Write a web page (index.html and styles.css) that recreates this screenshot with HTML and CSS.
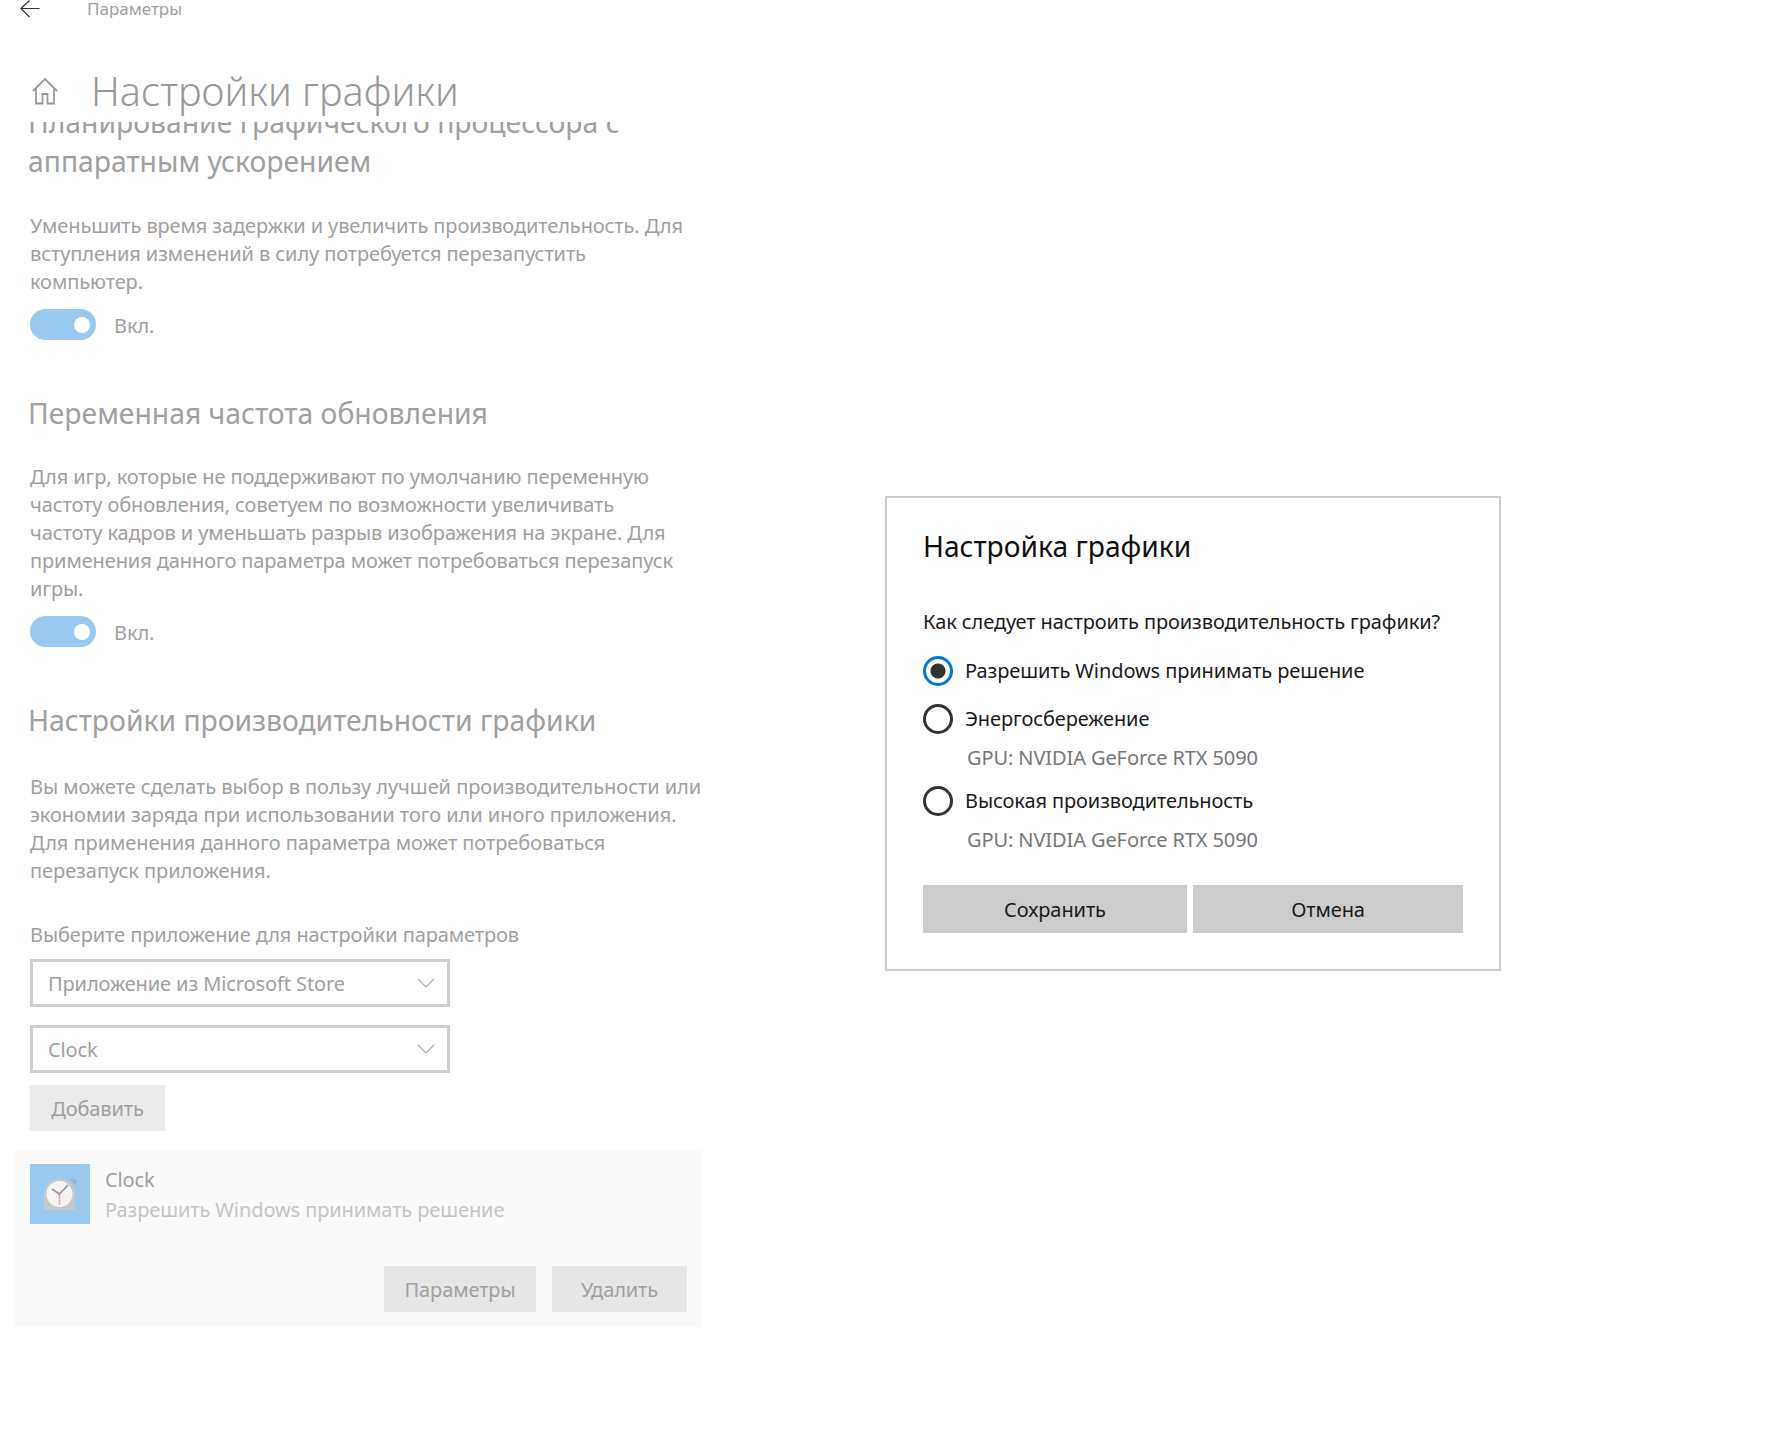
FILE: index.html
```html
<!DOCTYPE html>
<html lang="ru">
<head>
    <meta charset="UTF-8">
    <title>Настройки графики</title>
    <link rel="stylesheet" href="styles.css">
</head>
<body>
    <!-- Settings window behind the dialog -->
    <div class="settings">
        <div class="topbar">
            <svg class="back-icon" width="20" height="18" viewBox="0 0 20 18"><path d="M9.5 0.5 1 8.5l8.5 8.5M1 8.5h18.5" fill="none" stroke="#333" stroke-width="1.2"/></svg>
            <span class="topbar-title">Параметры</span>
        </div>
        <div class="page-head">
            <svg class="home-icon" width="28" height="28" viewBox="0 0 28 28"><path d="M2 14 14 2l12 12M5 11v15.500h6.500V17h5v9.500H23V11" fill="none" stroke="#999" stroke-width="1.800"/></svg>
            <h1 class="page-title">Настройки графики</h1>
        </div>
        <div class="scroll-area">
            <div class="scroll-inner">
                <section class="group">
                    <h2 class="group-title">Планирование графического процессора с<br>аппаратным ускорением</h2>
                    <p class="group-text">Уменьшить время задержки и увеличить производительность. Для<br>вступления изменений в силу потребуется перезапустить<br>компьютер.</p>
                    <div class="toggle-row"><span class="toggle"><span class="toggle-thumb"></span></span><span class="toggle-label">Вкл.</span></div>
                </section>
                <section class="group">
                    <h2 class="group-title">Переменная частота обновления</h2>
                    <p class="group-text">Для игр, которые не поддерживают по умолчанию переменную<br>частоту обновления, советуем по возможности увеличивать<br>частоту кадров и уменьшать разрыв изображения на экране. Для<br>применения данного параметра может потребоваться перезапуск<br>игры.</p>
                    <div class="toggle-row"><span class="toggle"><span class="toggle-thumb"></span></span><span class="toggle-label">Вкл.</span></div>
                </section>
                <section class="group">
                    <h2 class="group-title">Настройки производительности графики</h2>
                    <p class="group-text group-text-wide">Вы можете сделать выбор в пользу лучшей производительности или<br>экономии заряда при использовании того или иного приложения.<br>Для применения данного параметра может потребоваться<br>перезапуск приложения.</p>
                    <div class="field-label">Выберите приложение для настройки параметров</div>
                    <div class="combo">Приложение из Microsoft Store<svg width="18" height="10" viewBox="0 0 18 10"><path d="M1 1l8 8 8-8" fill="none" stroke="#aaa" stroke-width="1.100"/></svg></div>
                    <div class="combo">Clock<svg width="18" height="10" viewBox="0 0 18 10"><path d="M1 1l8 8 8-8" fill="none" stroke="#aaa" stroke-width="1.100"/></svg></div>
                    <button class="btn-add">Добавить</button>
                </section>
                <div class="app-panel">
                    <div class="app-row">
                        <svg class="app-icon" width="60" height="60" viewBox="0 0 60 60">
                            <rect width="60" height="60" fill="#9ac9f0"/>
                            <path d="M40 16l4-2 3 3-2 4z" fill="#a8b2ba"/>
                            <path d="M14 30a15.500 15.500 0 0 1 31 0v16H14z" fill="#c3c8cc"/>
                            <circle cx="29.500" cy="30" r="13" fill="#f4f4f4"/>
                            <path d="M22 25l7.500 5 8.500-9" fill="none" stroke="#999" stroke-width="1.800"/>
                            <path d="M29.500 31v10" stroke="#f0a68c" stroke-width="1.500"/>
                        </svg>
                        <div class="app-info">
                            <div class="app-name">Clock</div>
                            <div class="app-mode">Разрешить Windows принимать решение</div>
                        </div>
                    </div>
                    <div class="app-actions">
                        <button class="btn-panel btn-options">Параметры</button>
                        <button class="btn-panel btn-remove">Удалить</button>
                    </div>
                </div>
            </div>
        </div>
    </div>

    <!-- Graphics preference dialog -->
    <div class="dialog">
        <h2 class="dialog-title">Настройка графики</h2>
        <div class="dialog-question">Как следует настроить производительность графики?</div>
        <div class="radio-row first"><span class="radio checked"></span>Разрешить Windows принимать решение</div>
        <div class="radio-row"><span class="radio"></span>Энергосбережение</div>
        <div class="gpu-name">GPU: NVIDIA GeForce RTX 5090</div>
        <div class="radio-row"><span class="radio"></span>Высокая производительность</div>
        <div class="gpu-name">GPU: NVIDIA GeForce RTX 5090</div>
        <div class="dialog-actions">
            <button class="btn-dialog btn-save">Сохранить</button>
            <button class="btn-dialog btn-cancel">Отмена</button>
        </div>
    </div>
</body>
</html>
```
FILE: styles.css
```css
html, body {
    margin: 0;
    padding: 0;
    height: 100%;
    overflow: hidden;
    background: #fff;
}
body {
    font-family: "Noto Sans", "Open Sans", sans-serif;
    font-size: 20px;
    letter-spacing: -0.1px;
    color: #a0a0a0;
}
h1, h2, p {
    margin: 0;
    font-weight: 400;
}
button {
    border: none;
    font-family: inherit;
    font-size: 20px;
    letter-spacing: inherit;
    padding: 0;
}

.settings {
    width: 715px;
}
.topbar {
    display: flex;
    align-items: center;
    height: 18px;
    padding-left: 20px;
}
.topbar-title {
    margin-left: 47px;
    font-size: 17px;
    letter-spacing: 0;
    line-height: 18px;
}
.back-icon {
    flex: none;
}
.page-head {
    display: flex;
    align-items: center;
    height: 104px;
    padding: 0 0 0 31px;
    background: #fff;
    position: relative;
    z-index: 1;
}
.home-icon {
    flex: none;
    margin-top: 42px;
}
.page-title {
    margin: 42px 0 0 32px;
    font-size: 39.7px;
    font-weight: 300;
    letter-spacing: 0;
    line-height: 50px;
    color: #999;
}

.scroll-area {
    overflow: hidden;
    height: 1210px;
}
.scroll-inner {
    margin-top: -19px;
    padding-left: 30px;
}
.group-title {
    margin-left: -2px;
    font-size: 28.3px;
    letter-spacing: 0;
    line-height: 39px;
}
.group-text {
    margin-top: 30px;
    line-height: 28px;
}
.group:first-child .group-text {
    margin-top: 31px;
}
.group-text-wide {
    margin-top: 33px;
    letter-spacing: -0.05px;
}
.toggle-row {
    display: flex;
    align-items: center;
    height: 31px;
    margin-top: 13px;
}
.toggle {
    display: flex;
    align-items: center;
    justify-content: flex-end;
    width: 66px;
    height: 31px;
    padding-right: 6px;
    box-sizing: border-box;
    border-radius: 16px;
    background: #9ac9f0;
}
.toggle-thumb {
    width: 16px;
    height: 16px;
    border-radius: 50%;
    background: #fff;
}
.toggle-label {
    margin: 2px 0 0 18px;
}
.group {
    margin-bottom: 54px;
}
.field-label {
    margin-top: 36px;
    line-height: 28px;
}
.combo {
    display: flex;
    align-items: center;
    justify-content: space-between;
    box-sizing: border-box;
    width: 420px;
    height: 48px;
    margin-top: 10px;
    padding: 0 12px 0 15px;
    border: 3px solid #d0d0d0;
}
.combo + .combo {
    margin-top: 18px;
}
.btn-add {
    display: block;
    width: 135px;
    height: 46px;
    margin-top: 12px;
    background: #ebebeb;
    color: #a0a0a0;
}
.group:last-of-type {
    margin-bottom: 18px;
}

.app-panel {
    box-sizing: border-box;
    width: 687px;
    height: 178px;
    margin-left: -15px;
    padding: 15px;
    background: #fafafa;
}
.app-row {
    display: flex;
    align-items: flex-start;
}
.app-icon {
    flex: none;
}
.app-info {
    margin-left: 15px;
}
.app-name {
    margin-top: 1px;
    line-height: 30px;
}
.app-mode {
    color: #c4c4c4;
    line-height: 30px;
}
.app-actions {
    display: flex;
    justify-content: flex-end;
    gap: 16px;
    margin-top: 41px;
}
.btn-panel {
    height: 46px;
    background: #e6e6e6;
    color: #a0a0a0;
}
.btn-options {
    width: 152px;
}
.btn-remove {
    width: 135px;
}

.dialog {
    position: absolute;
    left: 885px;
    top: 496px;
    box-sizing: border-box;
    width: 616px;
    height: 475px;
    padding: 0 36px;
    border: 2px solid #ccc;
    background: #fff;
    color: #1a1a1a;
}
.dialog-title {
    margin-top: 29px;
    font-size: 28.2px;
    letter-spacing: 0;
    line-height: 38px;
    color: #111;
}
.dialog-question {
    margin-top: 43px;
    line-height: 28px;
}
.radio-row {
    display: flex;
    align-items: center;
    height: 30px;
    margin-top: 18px;
    line-height: 30px;
}
.radio-row.first {
    margin-top: 20px;
}
.radio {
    flex: none;
    box-sizing: border-box;
    width: 30px;
    height: 30px;
    margin-right: 12px;
    border: 3px solid #333;
    border-radius: 50%;
}
.radio.checked {
    border: 3px solid #0078d7;
    background: radial-gradient(circle, #333 0 7px, #fff 8px);
}
.gpu-name {
    margin: 9px 0 0 44px;
    line-height: 30px;
    color: #777;
}
.gpu-name + .radio-row {
    margin-top: 13px;
}
.dialog-actions {
    display: flex;
    gap: 6px;
    margin-top: 30px;
}
.btn-dialog {
    height: 48px;
    background: #ccc;
    color: #1a1a1a;
}
.btn-save {
    width: 264px;
}
.btn-cancel {
    width: 270px;
}
```
